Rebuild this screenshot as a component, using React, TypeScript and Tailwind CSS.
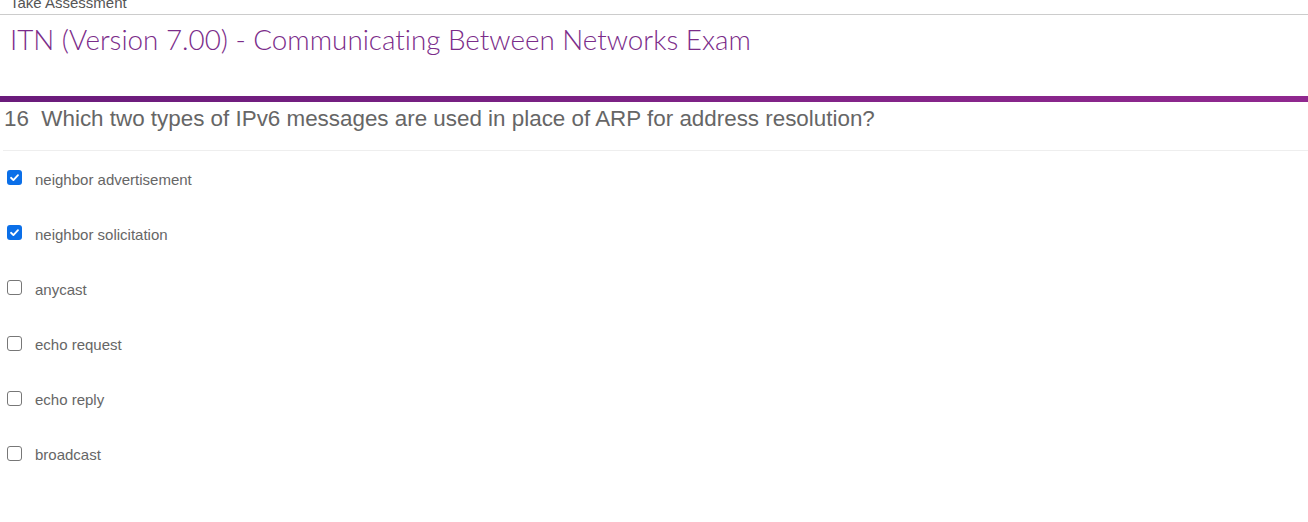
import React from "react";

const options = [
  { label: "neighbor advertisement", checked: true },
  { label: "neighbor solicitation", checked: true },
  { label: "anycast", checked: false },
  { label: "echo request", checked: false },
  { label: "echo reply", checked: false },
  { label: "broadcast", checked: false },
];

function Box({ checked }: { checked: boolean }) {
  if (checked)
    return (
      <span className="w-[15px] h-[15px] rounded-[3px] bg-[#0b6fe8] flex items-center justify-center shrink-0">
        <svg viewBox="0 0 12 12" className="w-[11px] h-[11px]">
          <path d="M2.2 6.3 L4.8 8.8 L9.8 3.4" fill="none" stroke="white" strokeWidth="2" strokeLinecap="round" strokeLinejoin="round" />
        </svg>
      </span>
    );
  return <span className="w-[15px] h-[15px] rounded-[3px] border border-[#777777] bg-white shrink-0" />;
}

export default function App() {
  return (
    <div className="w-[1308px] h-[522px] bg-white overflow-hidden font-['Liberation_Sans',Arial,sans-serif]">
      {/* header */}
      <div className="h-[15px] border-b border-[#cccccc] overflow-hidden">
        <div className="pl-[10px] text-[15px] leading-[15px] -mt-[5px] text-[#555555]">Take Assessment</div>
      </div>
      <h1 className="pl-[10px] pt-[7px] h-[81px] text-[27.8px] leading-[36px] font-light text-[#7b2c8a] font-['Lato',sans-serif] [font-variant-ligatures:none]">
        ITN (Version 7.00) - Communicating Between Networks Exam
      </h1>
      <div className="h-[6px] bg-gradient-to-r from-[#6a1b7b] to-[#90288f]" />

      {/* question */}
      <div className="pl-[1px] pt-[4px] pb-[19px] border-b border-[#eeeeee] ml-[3px]">
        <p className="text-[22.4px] leading-[25px] text-[#666666]">
          16&nbsp; Which two types of IPv6 messages are used in place of ARP for address resolution?
        </p>
      </div>

      <div className="pt-[19px] flex flex-col gap-[40.2px]">
        {options.map((o) => (
          <div key={o.label} className="flex items-center h-[15px] pl-[7px]">
            <Box checked={o.checked} />
            <span className="ml-[13px] mt-[3px] text-[15px] leading-[15px] text-[#666666]">{o.label}</span>
          </div>
        ))}
      </div>
    </div>
  );
}
